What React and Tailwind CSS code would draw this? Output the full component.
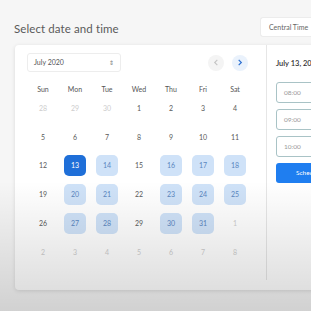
import React from "react";

const weeks = [
  [[28, "out"], [29, "out"], [30, "out"], [1], [2], [3], [4]],
  [[5], [6], [7], [8], [9], [10], [11]],
  [[12], [13, "sel"], [14, "av"], [15], [16, "av"], [17, "av"], [18, "av"]],
  [[19], [20, "av"], [21, "av"], [22], [23, "av"], [24, "av"], [25, "av"]],
  [[26], [27, "av"], [28, "av"], [29], [30, "av"], [31, "av"], [1, "out"]],
  [[2, "out"], [3, "out"], [4, "out"], [5, "out"], [6, "out"], [7, "out"], [8, "out"]],
];

const days = ["Sun", "Mon", "Tue", "Wed", "Thu", "Fri", "Sat"];

const Day = ({ n, kind }) => {
  // selected / available / outside month
  if (kind === "sel")
    return (
      <span className="w-[22px] h-[21px] rounded-[5px] bg-[#1f6fd8] text-white flex items-center justify-center">
        {n}
      </span>
    );
  if (kind === "av")
    return (
      <span className="w-[22px] h-[21px] rounded-[5px] bg-[#cfe2f8] text-[#5a86c0] flex items-center justify-center">
        {n}
      </span>
    );
  return <span className={kind === "out" ? "text-[#cdcdcd]" : "text-[#5a5a5a]"}>{n}</span>;
};

const App = () => {
  return (
    <div className="relative w-[311px] h-[311px] overflow-hidden bg-[#f6f6f6] font-['Lato',sans-serif]">
      {/* Header */}
      <div className="flex justify-between pl-[14px] pt-[17px] h-[45px] items-start">
        <h1 className="text-[11.5px] text-[#5a5a5a] mt-[3px] tracking-[0.1px]">Select date and time</h1>
        <div className="w-[51px] h-[20px] bg-white border border-[#ececec] rounded-l-[3px] border-r-0 flex items-center pl-[8px] text-[7px] text-[#666] whitespace-nowrap overflow-hidden">
          Central Time
        </div>
      </div>

      {/* Card */}
      <div className="ml-[15px] w-[320px] h-[245px] bg-white rounded-l-[4px] shadow-[0_1px_4px_rgba(0,0,0,0.12)] flex">
        {/* Calendar */}
        <div className="pl-[12px] pt-[8px] w-[252px] border-r border-[#e6e6e6] h-[235px]">
          <div className="flex items-center justify-between w-[221px]">
            <div className="w-[94px] h-[19px] border border-[#ededed] rounded-[3px] flex items-center justify-between px-[6px] text-[7px] text-[#555]">
              <span>July 2020</span>
              <span className="text-[6px] leading-none text-[#777]">⇕</span>
            </div>
            <div className="flex gap-[8px]">
              <span className="w-[16px] h-[16px] rounded-full bg-[#f4f4f4] flex items-center justify-center">
                <svg width="6" height="7" viewBox="0 0 6 8" fill="none" stroke="#c4c4c4" strokeWidth="1.3">
                  <path d="M4.5 1 L1.5 4 L4.5 7" />
                </svg>
              </span>
              <span className="w-[16px] h-[16px] rounded-full bg-[#eaf2fc] flex items-center justify-center">
                <svg width="6" height="7" viewBox="0 0 6 8" fill="none" stroke="#2c6fd1" strokeWidth="1.4">
                  <path d="M1.5 1 L4.5 4 L1.5 7" />
                </svg>
              </span>
            </div>
          </div>

          <div className="grid grid-cols-7 w-[224px] mt-[11px] text-[7px] text-[#555]">
            {days.map((d) => (
              <div key={d} className="h-[12px] flex items-center justify-center">{d}</div>
            ))}
          </div>
          <div className="w-[224px] text-[7px] mt-[-1px]">
            {weeks.map((w, i) => (
              <div key={i} className="grid grid-cols-7 h-[28.7px]">
                {w.map(([n, kind], j) => (
                  <div key={j} className="flex items-center justify-center">
                    <Day n={n} kind={kind} />
                  </div>
                ))}
              </div>
            ))}
          </div>
        </div>

        {/* Time slots */}
        <div className="pl-[9px] pt-[13px] flex-1">
          <div className="text-[7.5px] text-[#333] font-semibold whitespace-nowrap">July 13, 2020</div>
          <div className="mt-[13px] flex flex-col gap-[6px]">
            {["08:00", "09:00", "10:00"].map((t) => (
              <div key={t} className="h-[21px] border border-[#a9c3c6] rounded-[3px] flex items-center pl-[7px] text-[6.5px] text-[#999]">
                {t}
              </div>
            ))}
            <div className="h-[20px] rounded-[3px] bg-[#1f7ef0] flex items-center pl-[20px] text-[6.5px] text-white">
              Schedule
            </div>
          </div>
        </div>
      </div>

      {/* bottom fade */}
      <div className="absolute inset-x-0 bottom-0 h-[130px] pointer-events-none bg-gradient-to-b from-transparent to-black/15" />
    </div>
  );
};

export default App;
